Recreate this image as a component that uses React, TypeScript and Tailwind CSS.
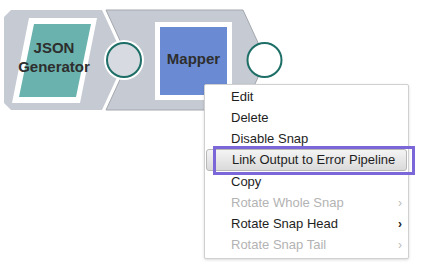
import React from "react";

const items: { label: string; disabled?: boolean; sub?: boolean; active?: boolean }[] = [
  { label: "Edit" },
  { label: "Delete" },
  { label: "Disable Snap" },
  { label: "Link Output to Error Pipeline", active: true },
  { label: "Copy" },
  { label: "Rotate Whole Snap", disabled: true, sub: true },
  { label: "Rotate Snap Head", sub: true },
  { label: "Rotate Snap Tail", disabled: true, sub: true },
];

export default function App() {
  return (
    <div className="relative w-[424px] h-[272px] bg-white overflow-hidden font-['Liberation_Sans',Arial,sans-serif]">
      {/* pipeline canvas */}
      <svg className="absolute left-0 top-0" width="424" height="272" viewBox="0 0 424 272">
        <path d="M4,17 L11,10 L102,10 L125,60 L102,110 L11,110 L4,103 Z" fill="#c6cad3" />
        <path
          d="M106,10 L243,10 L266,60 L243,110 L106,110 L129,60 Z"
          fill="#c6cad3"
          stroke="#a3a7ae"
          strokeWidth="1"
        />
        {/* JSON Generator icon */}
        <polygon points="29,18 97,18 80,103 12,103" fill="#ffffff" />
        <polygon points="34,24 91,24 76,97 19,97" fill="#6ab2ad" />
        {/* Mapper icon */}
        <rect x="155" y="22" width="77" height="78" fill="#ffffff" />
        <rect x="160" y="27" width="67" height="68" fill="#6a8bd4" />
        {/* ports */}
        <circle cx="124" cy="60" r="20" fill="#ffffff" />
        <circle cx="124" cy="60" r="17" fill="#d7dbe1" stroke="#1c6e66" strokeWidth="2" />
        <circle cx="264.5" cy="60" r="17" fill="#ffffff" stroke="#1c6e66" strokeWidth="2" />
      </svg>

      <div className="absolute left-[12px] top-[38px] w-[84px] text-center text-[15px] leading-[19px] font-bold text-[#2e2e2e]">
        JSON
        <br />
        Generator
      </div>
      <div className="absolute left-[155px] top-[49px] w-[77px] text-center text-[15px] leading-[19px] font-bold text-[#2e2e2e]">
        Mapper
      </div>

      {/* context menu */}
      <div className="absolute left-[204px] top-[84px] w-[205px] bg-white border border-[#d0d0d0] rounded-[2px] shadow-[0_1px_3px_rgba(0,0,0,0.15)] pt-[1px] pb-[3px]">
        {items.map((it) => (
          <div
            key={it.label}
            className={`relative flex items-center pr-[6px] text-[13px] ${
              it.disabled ? "text-[#b3b3b3]" : "text-[#1e1e1e]"
            } ${
              it.active
                ? "mx-[1px] border border-[#b7b7b7] rounded-[3px] bg-[linear-gradient(#f4f4f4,#dadada)] h-[22px] pl-[25px]"
                : "h-[21px] pl-[26px]"
            }`}
          >
            <span className="flex-1">{it.label}</span>
            {it.sub && <span className={`text-[12px] ${it.disabled ? "text-[#bbbbbb]" : "text-[#222] font-bold"}`}>›</span>}
            {it.active && (
              <div className="absolute left-[6px] -top-[4px] w-[202px] h-[29px] border-[3px] border-[#7b67d8] pointer-events-none" />
            )}
          </div>
        ))}
      </div>
    </div>
  );
}
